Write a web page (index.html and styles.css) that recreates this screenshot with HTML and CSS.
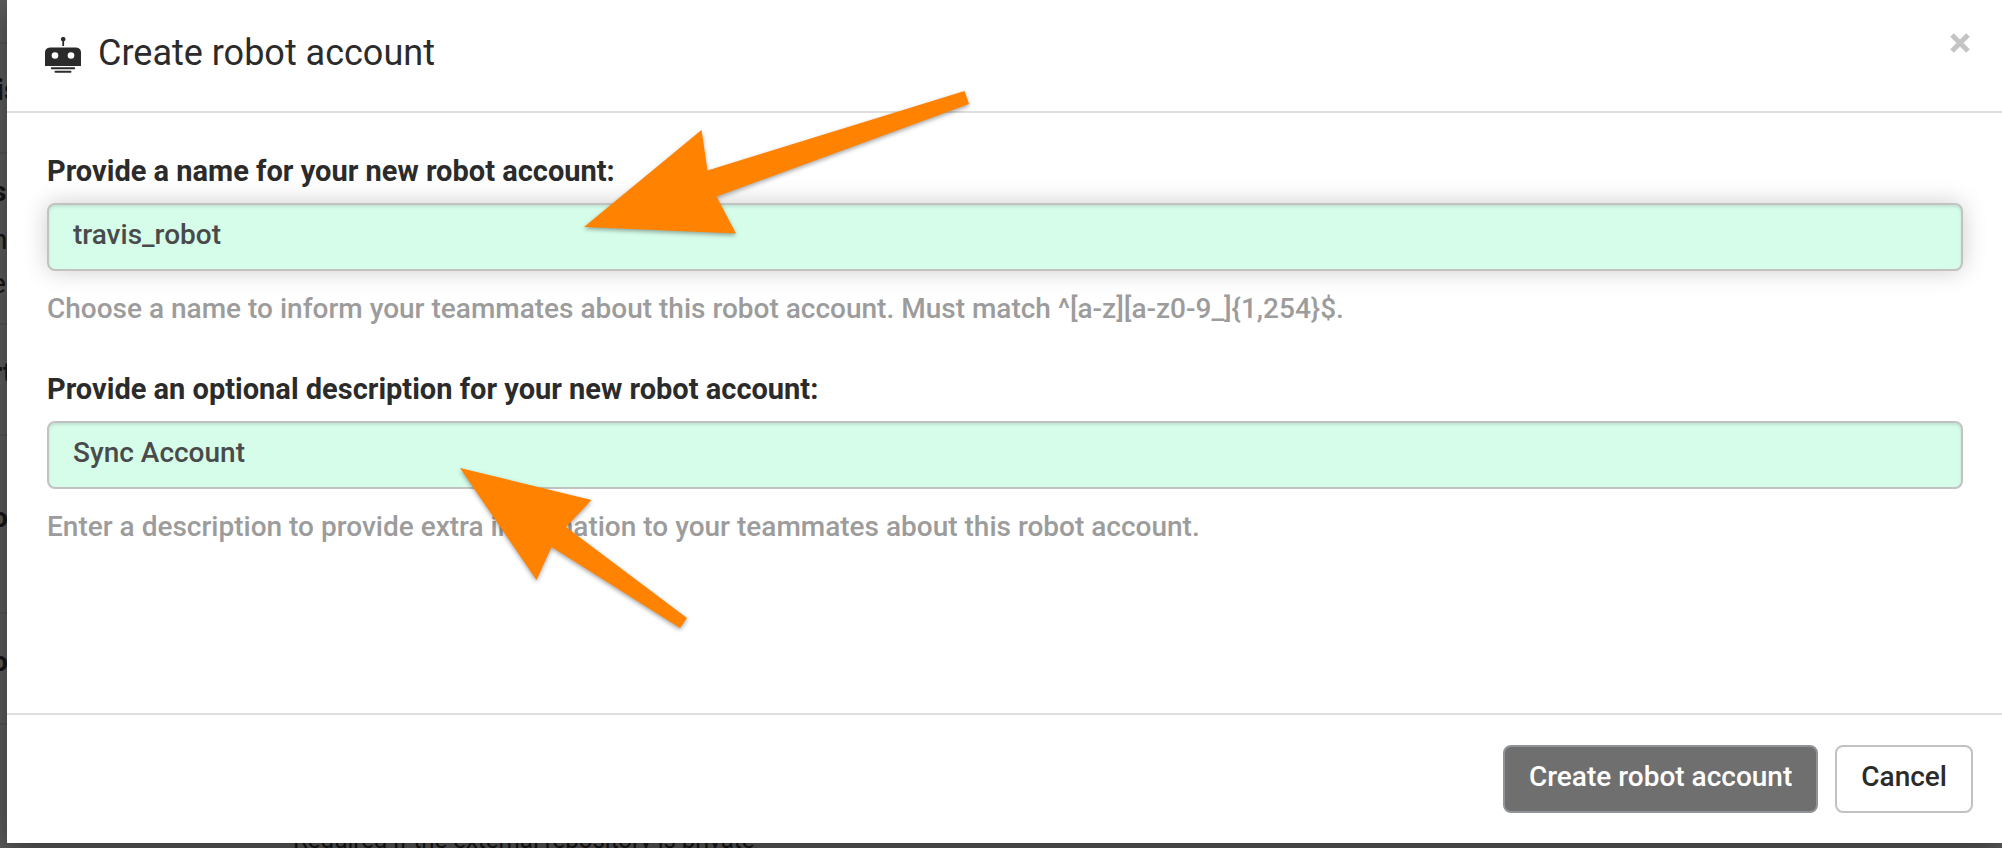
FILE: index.html
```html
<!DOCTYPE html>
<html lang="en">
<head>
<meta charset="utf-8">
<title>Create robot account</title>
<link rel="stylesheet" href="styles.css">
</head>
<body>
<div class="page" aria-hidden="true">
  <div class="page-row row-top"></div>
  <div class="page-row row-title"><b class="big">is</b></div>
  <div class="page-row row-text"><b>s</b><span>n</span><span>er</span></div>
  <div class="page-row row-short"><b>rt</b></div>
  <div class="page-row row-tall"><b>o</b></div>
  <div class="page-row row-short"><b>o</b></div>
  <div class="page-row row-last"><span class="note">Required if the external repository is private</span></div>
</div>

<form class="dialog" role="dialog" aria-labelledby="dialog-title">
  <header class="dialog-header">
    <svg class="robot" viewBox="0 0 36 36" aria-hidden="true">
      <path d="M17.300 9V4.300a2.300 2.300 0 1 1 1.800 0V9zM5 10.500H31Q36 11 36 15.500V29H0V15.500Q0 11 5 10.500z"/>
      <path class="base" d="M6.800 31.300H29.200M10.500 34.700H25.500"/>
      <circle class="eye" cx="10" cy="18.500" r="3.300"/>
      <circle class="eye" cx="26" cy="18.500" r="3.300"/>
    </svg>
    <h1 class="dialog-title" id="dialog-title">Create robot account</h1>
    <button class="close" type="button" aria-label="Close">
      <svg viewBox="0 0 20 20" aria-hidden="true"><path d="M2 2L18 18M18 2L2 18"/></svg>
    </button>
  </header>

  <div class="dialog-body">
    <div class="field">
      <label for="robot-name">Provide a name for your new robot account:</label>
      <input class="focused" id="robot-name" type="text" value="travis_robot" aria-describedby="name-help">
      <p class="help" id="name-help">Choose a name to inform your teammates about this robot account. Must match ^[a-z][a-z0-9_]{1,254}$.</p>
    </div>
    <div class="field">
      <label for="robot-description">Provide an optional description for your new robot account:</label>
      <input id="robot-description" type="text" value="Sync Account" aria-describedby="description-help">
      <p class="help" id="description-help">Enter a description to provide extra information to your teammates about this robot account.</p>
    </div>
  </div>

  <footer class="dialog-footer">
    <button class="button primary" type="submit">Create robot account</button>
    <button class="button" type="button">Cancel</button>
  </footer>
</form>

<svg class="arrow arrow-name" viewBox="0 0 386 144" aria-hidden="true">
  <path d="M0 136L117.500 39 123.500 79.500 380.500 0 385 13 132.500 105.500 152 142.500z"/>
</svg>
<svg class="arrow arrow-description" viewBox="0 0 228 160" aria-hidden="true">
  <path d="M0 0L131.500 32 106 59 227 150 220 160 91.500 79 76.500 112z"/>
</svg>
</body>
</html>
```
FILE: styles.css
```css
* { box-sizing: border-box; }

body {
  position: relative;
  margin: 0;
  min-height: 100vh;
  overflow: hidden;
  background: #5c5c5c;
  color: #2b2b2b;
  font-family: Roboto, "Liberation Sans", sans-serif;
  font-size: 28px;
  font-weight: 500;
  line-height: 40px;
}

/* Dimmed page behind the dialog */
.page {
  position: absolute;
  inset: 0;
  display: flex;
  flex-direction: column;
  overflow: hidden;
  color: #151515;
  font-size: 28px;
  font-weight: 400;
  line-height: 36px;
}
.page-row {
  display: flex;
  flex-direction: column;
  border-bottom: 2px solid #535353;
}
.page-row b, .page-row span { margin-left: -8px; }
.page-row .big { margin-left: -4px; font-size: 30px; }
.row-top { height: 44px; }
.row-title { height: 110px; padding-top: 28px; }
.row-text { height: 171px; padding-top: 20px; gap: 8px; }
.row-text span + span { margin-left: -9px; }
.row-text b { margin-bottom: 4px; }
.row-short { height: 111px; padding-top: 30px; }
.row-tall { height: 178px; padding-top: 64px; }
.row-last { flex: 1; justify-content: flex-end; border: 0; }
.row-last .note { margin: 0 0 -10px 293px; font-size: 24px; }

.dialog {
  position: relative;
  display: flex;
  flex-direction: column;
  margin-left: 7px;
  min-height: calc(100vh - 5px);
  background: #fff;
  box-shadow: 0 10px 30px rgba(0, 0, 0, 0.4);
}

.dialog-header {
  display: flex;
  align-items: flex-start;
  gap: 17px;
  padding: 29px 32px 34px 38px;
  border-bottom: 2px solid #dedede;
}
.robot { width: 36px; height: 36px; margin-top: 8px; fill: #2b2b2b; }
.robot .base { stroke: #2b2b2b; stroke-width: 2; stroke-linecap: round; }
.robot .eye { fill: #fff; }
.dialog-title {
  flex: 1;
  margin: 0;
  font-size: 36px;
  font-weight: 400;
  line-height: 48px;
}
.close {
  display: flex;
  margin-top: 4px;
  padding: 0;
  border: 0;
  background: none;
}
.close svg {
  width: 20px;
  height: 20px;
  fill: none;
  stroke: #c4c4c4;
  stroke-width: 5;
}

.dialog-body {
  display: flex;
  flex: 1;
  flex-direction: column;
  gap: 40px;
  padding: 38px 39px 38px 40px;
}
.field { display: flex; flex-direction: column; }
.field label { margin-bottom: 12px; font-size: 29px; font-weight: 700; }
.field input {
  width: 100%;
  height: 68px;
  padding: 0 24px 6px;
  border: 2px solid #c2c2c2;
  border-radius: 8px;
  outline: 0;
  background: #d6fdea;
  box-shadow: inset 0 2px 3px rgba(0, 0, 0, 0.1);
  color: #4a4a4a;
  font: inherit;
}
.field .focused {
  box-shadow: inset 0 2px 3px rgba(0, 0, 0, 0.1), 0 0 24px rgba(0, 0, 0, 0.2);
}
.help { margin: 18px 0 0; color: #9c9c9c; }

.dialog-footer {
  display: flex;
  justify-content: flex-end;
  gap: 17px;
  padding: 30px 29px;
  border-top: 2px solid #dedede;
}
.button {
  height: 68px;
  padding: 0 24px 4px;
  border: 2px solid #c2c2c2;
  border-radius: 8px;
  background: #fff;
  color: #2b2b2b;
  font: inherit;
}
.primary { border-color: #909498; background: #6f6f6f; color: #fff; }

/* Annotation arrows lying over the dialog */
.arrow {
  position: absolute;
  overflow: visible;
  fill: #ff8200;
  filter: drop-shadow(0 2px 2px rgba(0, 0, 0, 0.35));
  pointer-events: none;
}
.arrow-name { left: 584px; top: 91px; width: 386px; height: 144px; }
.arrow-description { left: 460px; top: 468px; width: 228px; height: 160px; }
```
